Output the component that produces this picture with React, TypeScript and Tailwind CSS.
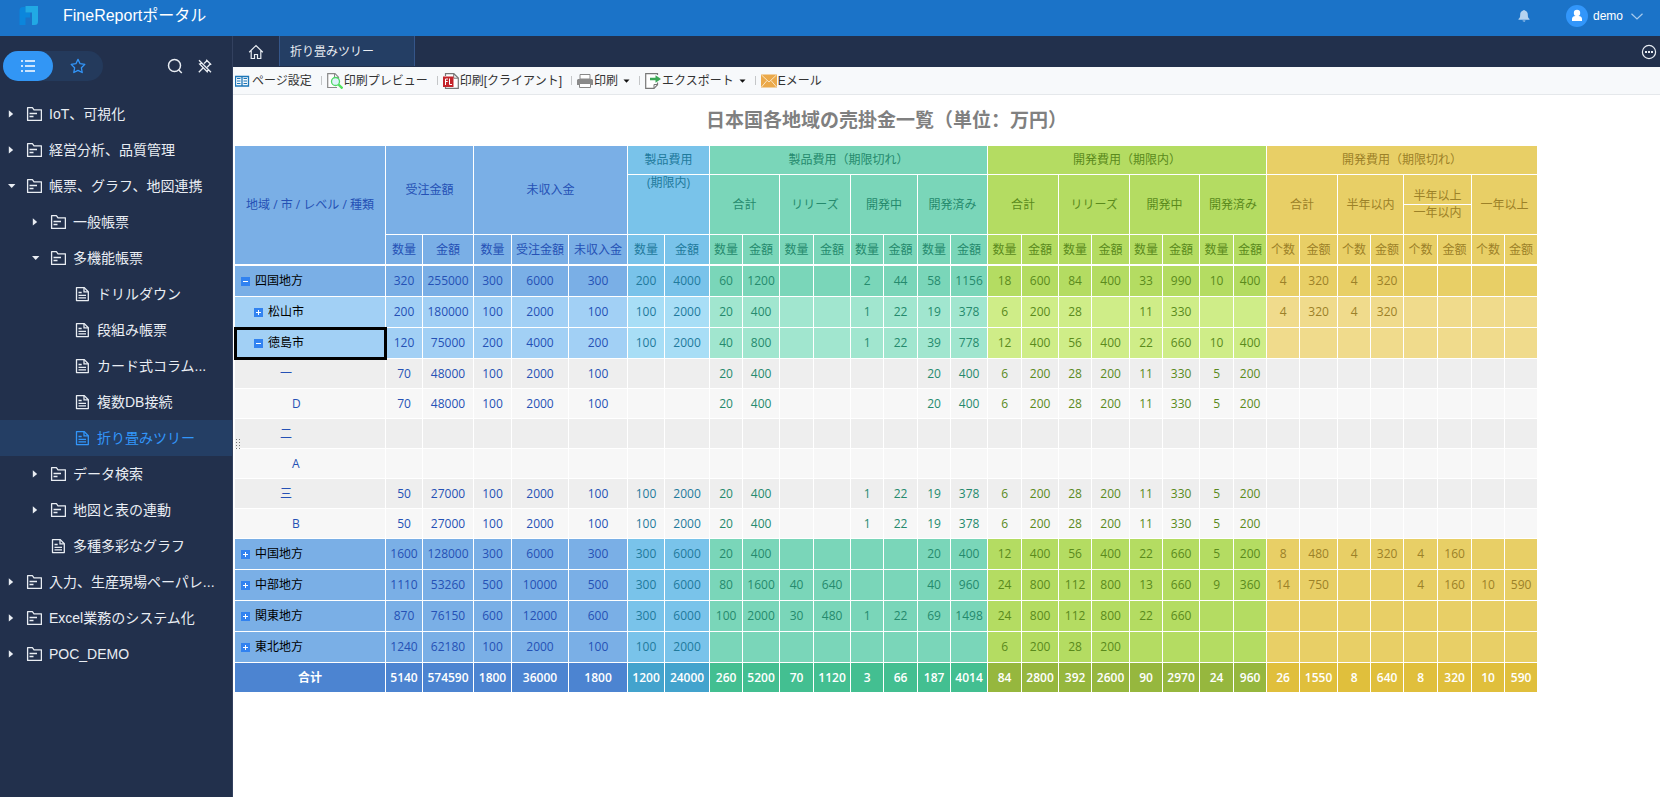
import clsx from "clsx";
import type { ReactNode } from "react";

type NavNode = {
  label: string;
  level: 0 | 1 | 2;
  kind: "folder" | "doc";
  open?: boolean;
  active?: boolean;
};

const NAV: NavNode[] = [
  { label: "IoT、可視化", level: 0, kind: "folder" },
  { label: "経営分析、品質管理", level: 0, kind: "folder" },
  { label: "帳票、グラフ、地図連携", level: 0, kind: "folder", open: true },
  { label: "一般帳票", level: 1, kind: "folder" },
  { label: "多機能帳票", level: 1, kind: "folder", open: true },
  { label: "ドリルダウン", level: 2, kind: "doc" },
  { label: "段組み帳票", level: 2, kind: "doc" },
  { label: "カード式コラム...", level: 2, kind: "doc" },
  { label: "複数DB接続", level: 2, kind: "doc" },
  { label: "折り畳みツリー", level: 2, kind: "doc", active: true },
  { label: "データ検索", level: 1, kind: "folder" },
  { label: "地図と表の連動", level: 1, kind: "folder" },
  { label: "多種多彩なグラフ", level: 1, kind: "doc" },
  { label: "入力、生産現場ペーパレ...", level: 0, kind: "folder" },
  { label: "Excel業務のシステム化", level: 0, kind: "folder" },
  { label: "POC_DEMO", level: 0, kind: "folder" },
];

const INDENT = ["pl-2", "pl-8", "pl-14"];

const COLS = [
  151, 37, 51, 38, 57, 59, 37, 45, 33, 37, 34, 37, 33, 34, 33, 37, 34, 37, 33,
  38, 33, 37, 34, 33, 33, 38, 33, 33, 34, 34, 33, 33,
];

// column groups: blue, sky, teal, green, gold
const GROUP_ENDS = [5, 7, 15, 23, 31];
const group = (col: number) => GROUP_ENDS.findIndex((end) => col <= end);

const TEXT = [
  "text-[#2551b5]",
  "text-[#1f7a9c]",
  "text-[#258a6d]",
  "text-[#5a8a1c]",
  "text-[#9c8128]",
];
const BASE = [
  "bg-[#7aafe6]",
  "bg-[#79c3ea]",
  "bg-[#7ad6b9]",
  "bg-[#b4dc62]",
  "bg-[#e8cf66]",
];
const LIGHT = [
  "bg-[#a2d0f5]",
  "bg-[#a8def6]",
  "bg-[#a1e6cf]",
  "bg-[#cfed88]",
  "bg-[#f0db8c]",
];
const TOTAL = [
  "bg-[#4c84d1]",
  "bg-[#43a3cd]",
  "bg-[#43bf91]",
  "bg-[#96b73e]",
  "bg-[#e0bf3c]",
];

type RowKind = "region" | "city" | "grade" | "item" | "total";
type Row = {
  label: string;
  kind: RowKind;
  open?: boolean;
  selected?: boolean;
  values: string;
};

// "-" stands for an empty cell
const ROWS: Row[] = [
  { label: "四国地方", kind: "region", open: true, values: "320 255000 300 6000 300 200 4000 60 1200 - - 2 44 58 1156 18 600 84 400 33 990 10 400 4 320 4 320 - - - -" },
  { label: "松山市", kind: "city", values: "200 180000 100 2000 100 100 2000 20 400 - - 1 22 19 378 6 200 28 - 11 330 - - 4 320 4 320 - - - -" },
  { label: "徳島市", kind: "city", open: true, selected: true, values: "120 75000 200 4000 200 100 2000 40 800 - - 1 22 39 778 12 400 56 400 22 660 10 400 - - - - - - - -" },
  { label: "一", kind: "grade", values: "70 48000 100 2000 100 - - 20 400 - - - - 20 400 6 200 28 200 11 330 5 200 - - - - - - - -" },
  { label: "D", kind: "item", values: "70 48000 100 2000 100 - - 20 400 - - - - 20 400 6 200 28 200 11 330 5 200 - - - - - - - -" },
  { label: "二", kind: "grade", values: "- - - - - - - - - - - - - - - - - - - - - - - - - - - - - - -" },
  { label: "A", kind: "item", values: "- - - - - - - - - - - - - - - - - - - - - - - - - - - - - - -" },
  { label: "三", kind: "grade", values: "50 27000 100 2000 100 100 2000 20 400 - - 1 22 19 378 6 200 28 200 11 330 5 200 - - - - - - - -" },
  { label: "B", kind: "item", values: "50 27000 100 2000 100 100 2000 20 400 - - 1 22 19 378 6 200 28 200 11 330 5 200 - - - - - - - -" },
  { label: "中国地方", kind: "region", values: "1600 128000 300 6000 300 300 6000 20 400 - - - - 20 400 12 400 56 400 22 660 5 200 8 480 4 320 4 160 - -" },
  { label: "中部地方", kind: "region", values: "1110 53260 500 10000 500 300 6000 80 1600 40 640 - - 40 960 24 800 112 800 13 660 9 360 14 750 - - 4 160 10 590" },
  { label: "関東地方", kind: "region", values: "870 76150 600 12000 600 300 6000 100 2000 30 480 1 22 69 1498 24 800 112 800 22 660 - - - - - - - - - -" },
  { label: "東北地方", kind: "region", values: "1240 62180 100 2000 100 100 2000 - - - - - - - - 6 200 28 200 - - - - - - - - - - - -" },
  { label: "合计", kind: "total", values: "5140 574590 1800 36000 1800 1200 24000 260 5200 70 1120 3 66 187 4014 84 2800 392 2600 90 2970 24 960 26 1550 8 640 8 320 10 590" },
];

const UNITS = [
  "数量", "金額", "数量", "受注金額", "未収入金", "数量", "金額",
  "数量", "金額", "数量", "金額", "数量", "金額", "数量", "金額",
  "数量", "金額", "数量", "金額", "数量", "金額", "数量", "金額",
  "个数", "金额", "个数", "金额", "个数", "金额", "个数", "金额",
];

function FolderIcon() {
  return (
    <svg className="size-4 shrink-0" viewBox="0 0 16 16" fill="none" stroke="currentColor" strokeWidth="1.3">
      <path d="M1.600 14.400V1.700h4.800l1.600 2.100h7.400v10.600z" strokeLinejoin="round" />
      <path d="M3.500 7.500h7.500M3.500 10.500h4" />
    </svg>
  );
}

function DocIcon() {
  return (
    <svg className="size-4 shrink-0" viewBox="0 0 16 16" fill="none" stroke="currentColor" strokeWidth="1.3">
      <path d="M2.500 1.600h7.800l4 4.100v8.900H2.500z" strokeLinejoin="round" />
      <path d="M10 1.600v4.300h4.300M4.500 6.500h3.200M4.500 9.300h7.500M4.500 11.900h7.500" />
    </svg>
  );
}

function Caret({ open }: { open?: boolean }) {
  return (
    <svg className="size-2 shrink-0" viewBox="0 0 8 8" fill="currentColor">
      {open ? <path d="M0 2h7.400L3.700 6z" /> : <path d="M0.800 0.200v7.400L5.200 3.900z" />}
    </svg>
  );
}

function NavItem({ node }: { node: NavNode }) {
  return (
    <li>
      <a
        href="#"
        className={clsx(
          "flex h-9 items-center text-[14px] whitespace-nowrap",
          INDENT[node.level],
          node.active ? "bg-[#243e64] text-[#3296fa]" : "text-[#e9edf3]",
        )}
      >
        <span className="flex w-[18px] shrink-0 items-center">
          {node.kind === "folder" && <Caret open={node.open} />}
        </span>
        {node.kind === "folder" ? <FolderIcon /> : <DocIcon />}
        <span className="ml-[7px]">{node.label}</span>
      </a>
    </li>
  );
}

function Sidebar() {
  return (
    <aside className="w-[233px] shrink-0 border-r border-[#33415f] bg-[#22304c]">
      <div className="flex h-[45px] items-end justify-between pr-[19px] pl-[3px]">
        <div className="flex h-[30px] w-[100px] rounded-full bg-[#243a5c]">
          <button aria-label="ディレクトリ" className="flex w-[50px] items-center justify-center rounded-full bg-[#3296f5] text-white">
            <svg className="size-4" viewBox="0 0 16 16" fill="none" stroke="currentColor" strokeWidth="1.6">
              <path d="M5 3h10M5 8h10M5 13h10M1 3h2M1 8h2M1 13h2" />
            </svg>
          </button>
          <button aria-label="お気に入り" className="flex w-[50px] items-center justify-center text-[#3296fa]">
            <svg className="size-4" viewBox="0 0 16 16" fill="none" stroke="currentColor" strokeWidth="1.3" strokeLinejoin="round">
              <path d="M8 1.4l2.1 4.3 4.7.7-3.4 3.4.8 4.7L8 12.3l-4.2 2.2.8-4.7L1.2 6.4l4.7-.7z" />
            </svg>
          </button>
        </div>
        <div className="flex h-[30px] items-center gap-[14px] text-[#e9edf3]">
          <button aria-label="検索">
            <svg className="size-4" viewBox="0 0 16 16" fill="none" stroke="currentColor" strokeWidth="1.5">
              <circle cx="7.500" cy="7.500" r="6" />
              <path d="M11.800 12l3 3" />
            </svg>
          </button>
          <button aria-label="固定解除">
            <svg className="size-4" viewBox="0 0 16 16" fill="none" stroke="currentColor" strokeWidth="1.3">
              <path d="M2 2.200l12 12M9.200 1.800l5 5M10 2.800L7 5.600M13.200 6l-3 3.200M5.200 5L2.600 6l7.600 7.800 1-2.800M6 10l-4.200 4.300" />
            </svg>
          </button>
        </div>
      </div>
      <ul className="mt-[15px]">
        {NAV.map((node) => (
          <NavItem key={node.label} node={node} />
        ))}
      </ul>
    </aside>
  );
}

function TopBar() {
  return (
    <header className="flex h-9 items-center justify-between bg-[#1b73c8] pr-[17px] pb-1 pl-[18px] text-white">
      <div className="flex items-center">
        <svg className="h-5 w-[22px]" viewBox="0 0 22 20">
          <path d="M1.500 4.500A3.500 3.500 0 0 1 5 1h2.500v5.500H12v5H7.500V19h-6z" fill="#0b86dc" />
          <path d="M7.500 0H20v15.500a3.500 3.500 0 0 1-3.500 3.500H14V6.500H7.500z" fill="#21a9e4" />
        </svg>
        <h1 className="ml-[23px] text-[16px] leading-5">FineReportポータル</h1>
      </div>
      <div className="flex items-center">
        <button aria-label="通知" className="mr-9 text-[#b4d2ef]">
          <svg className="size-3" viewBox="0 0 12 12" fill="currentColor">
            <path d="M5.300.6a.7.7 0 0 1 1.400 0C8.700 1 9.800 2.600 9.800 4.500c0 2.800.5 3.700 1.700 4.500v.7H.5V9c1.200-.8 1.700-1.700 1.700-4.500C2.200 2.600 3.300 1 5.300.6zM4.500 10.500h3c-.2.8-.8 1.200-1.500 1.200s-1.300-.4-1.500-1.200z" />
          </svg>
        </button>
        <button className="flex items-center">
          <svg className="size-[22px]" viewBox="0 0 22 22">
            <circle cx="11" cy="11" r="11" fill="#3296fa" />
            <circle cx="11" cy="8" r="3.200" fill="#fff" />
            <path d="M6 16v-2.200c0-1.700 1.500-2.800 3.300-2.800h3.400c1.800 0 3.300 1.100 3.300 2.800V16z" fill="#fff" />
          </svg>
          <span className="ml-[5px] text-[12px] leading-4">demo</span>
          <svg className="ml-2 h-[7px] w-3" viewBox="0 0 12 7" fill="none" stroke="#a8cbee" strokeWidth="1.200">
            <path d="M.5.7L6 6 11.500.7" />
          </svg>
        </button>
      </div>
    </header>
  );
}

function TabBar() {
  return (
    <nav className="flex h-[31px] items-center bg-[#22304c] pr-[3px] text-[#e9edf3]">
      <button aria-label="ホーム" className="flex w-[46px] justify-center pr-px">
        <svg className="size-4" viewBox="0 0 16 16" fill="none" stroke="currentColor" strokeWidth="1.200">
          <path d="M1.200 8.200L8 1.500l6.800 6.700M3.200 6.500v8h3.300v-4h3v4h3.300v-8" />
        </svg>
      </button>
      <a href="#" className="flex h-[30px] w-[136px] items-center self-start border-x border-[#35568a] bg-[#243e64] pt-px pl-[10px] text-[12px]">
        折り畳みツリー
      </a>
      <button aria-label="その他" className="ml-auto">
        <svg className="size-4" viewBox="0 0 16 16" fill="none" stroke="currentColor" strokeWidth="1.200">
          <circle cx="8" cy="8" r="6.600" />
          <path d="M4 8h2M7 8h2M10 8h2" strokeWidth="1.800" />
        </svg>
      </button>
    </nav>
  );
}

function Tool({ icon, label, menu }: { icon: ReactNode; label: string; menu?: boolean }) {
  return (
    <button className="flex items-center gap-px">
      {icon}
      <span>{label}</span>
      {menu && (
        <svg className="ml-1 h-1 w-[7px]" viewBox="0 0 7 4">
          <path d="M0.500 0.500h6L3.500 3.800z" fill="#111" />
        </svg>
      )}
    </button>
  );
}

const Divider = () => <span className="mr-[5px] ml-[9px] h-[9px] w-px bg-[#c4c6c8]" />;

function Toolbar() {
  return (
    <div className="flex h-7 items-center border-b border-[#e5e8eb] bg-[#f7f9fb] pl-[2px] text-[12px] text-[#333]">
      <Tool
        label="ページ設定"
        icon={
          <svg className="size-4" viewBox="0 0 16 16" fill="none" stroke="#1b76b8">
            <path d="M.5 3.500h13v9.500H.5zM7 3v10" strokeWidth="1.300" />
            <path d="M2 5.500h3.500M2 8h3.500M2 10.500h3.500M8.500 5.500H12M8.500 8H12M8.500 10.500H12" />
          </svg>
        }
      />
      <Divider />
      <Tool
        label="印刷プレビュー"
        icon={
          <svg className="size-4" viewBox="0 0 16 16" fill="none">
            <path d="M10 14.500H.7V.7h7.300l3.500 3.500v2" fill="#fff" stroke="#888" strokeWidth="1.200" />
            <path d="M7.500.7v3.800h4" stroke="#888" />
            <circle cx="8.500" cy="8.500" r="4" fill="#dff2fb" stroke="#4fd966" strokeWidth="1.300" />
            <path d="M11.500 11.500l4 4" stroke="#4fe05c" strokeWidth="2.400" />
          </svg>
        }
      />
      <Divider />
      <Tool
        label="印刷[クライアント]"
        icon={
          <svg className="size-4" viewBox="0 0 16 16" fill="none">
            <path d="M2.500 3V.7h8.300L15.300 5v10.300H2.500V14" fill="#fff" stroke="#777" strokeWidth="1.200" />
            <path d="M10.700.7v4.500h4.500" stroke="#777" />
            <path d="M0 3.500h10.500V14H0z" fill="#c4242b" />
            <path d="M2.500 12V6H5M2.500 8.500h2.200M6.500 5.500v6H9" stroke="#fff" />
          </svg>
        }
      />
      <Divider />
      <Tool
        label="印刷"
        menu
        icon={
          <svg className="size-4" viewBox="0 0 16 16" fill="none">
            <path d="M3 1.500h10V6H3z" fill="#fff" stroke="#888" />
            <path d="M1 6h14l1 1v5H0V7z" fill="#8a8a8a" />
            <path d="M2.500 10.500h11v4h-11z" fill="#fff" stroke="#888" />
          </svg>
        }
      />
      <Divider />
      <Tool
        label="エクスポート"
        menu
        icon={
          <svg className="size-4" viewBox="0 0 16 16" fill="none">
            <path d="M12.500 2V.7H.7v14.600h8.300l3.500-3.500V9.500" fill="#fff" stroke="#777" strokeWidth="1.200" />
            <path d="M12.500 11.500H9v3.800" stroke="#777" />
            <path d="M5 4.800h5.500V2.300L16 6l-5.500 3.800V7.300H5z" fill="#3aa856" />
          </svg>
        }
      />
      <Divider />
      <Tool
        label="Eメール"
        icon={
          <svg className="size-4" viewBox="0 0 16 16" fill="none">
            <path d="M0 1.500h16v13H0z" fill="#eba94a" />
            <path d="M.5 2l7.500 7L15.500 2M.5 14l5.500-6.500M15.500 14L10 7.500" stroke="#fbe6c4" strokeWidth="1" />
          </svg>
        }
      />
    </div>
  );
}

type HeadProps = {
  g: number;
  colSpan?: number;
  rowSpan?: number;
  className?: string;
  children: ReactNode;
};

function Head({ g, className, children, ...span }: HeadProps) {
  return (
    <th
      {...span}
      className={clsx("border-r border-b border-white p-0 font-normal whitespace-nowrap", BASE[g], TEXT[g], className)}
    >
      {children}
    </th>
  );
}

function Toggle({ open }: { open?: boolean }) {
  return (
    <button aria-label={open ? "折り畳む" : "展開"} className="mr-[5px]">
      <svg className="block size-[9px]" viewBox="0 0 9 9">
        <path d="M0 0h9v9H0z" fill="#3182f0" />
        <path d={open ? "M2 4.500h5" : "M2 4.500h5M4.500 2v5"} stroke="#fff" />
      </svg>
    </button>
  );
}

function cellColor(kind: RowKind, g: number) {
  if (kind === "region") return clsx(BASE[g], TEXT[g]);
  if (kind === "city") return clsx(LIGHT[g], TEXT[g]);
  if (kind === "grade") return clsx("bg-[#eeeeee]", TEXT[g]);
  if (kind === "item") return clsx("bg-[#f7f7f7]", TEXT[g]);
  return clsx(TOTAL[g], "font-semibold text-white");
}

const LABEL: Record<RowKind, string> = {
  region: "pl-[6px] text-left",
  city: "pl-[19px] text-left",
  grade: "pl-[45px] text-left",
  item: "pl-[57px] text-left",
  total: "text-center",
};

function DataRow({ row }: { row: Row }) {
  const tall = row.kind === "region" || row.kind === "city";
  return (
    <tr className={tall ? "h-[31px]" : "h-[30px]"}>
      <th
        scope="row"
        className={clsx(
          "border-r border-b border-white py-0 pr-0",
          row.kind !== "total" && "font-normal",
          cellColor(row.kind, 0),
          LABEL[row.kind],
          row.selected && "outline-3 -outline-offset-2 outline-black",
        )}
      >
        <span className={clsx(tall && "flex items-center text-black")}>
          {tall && <Toggle open={row.open} />}
          {row.label}
        </span>
      </th>
      {row.values.split(" ").map((value, i) => (
        <td
          key={i}
          className={clsx("border-r border-b border-white p-0 text-center", cellColor(row.kind, group(i + 1)))}
        >
          {value === "-" ? "" : value}
        </td>
      ))}
    </tr>
  );
}

function Report() {
  return (
    <table className="w-[1303px] table-fixed border-separate border-spacing-0 font-['Open_Sans','Noto_Sans_CJK_SC',sans-serif] text-[12px] leading-4">
      <caption className="h-[51px] pt-[13px] text-[19px] leading-6 font-bold text-[#808080]">
        日本国各地域の売掛金一覧（単位：万円）
      </caption>
      <colgroup>
        {COLS.map((width, i) => (
          <col key={i} style={{ width }} />
        ))}
      </colgroup>
      <thead>
        <tr className="h-[29px]">
          <Head g={0} rowSpan={4} className="border-b-2">地域 / 市 / レベル / 種類</Head>
          <Head g={0} rowSpan={3} colSpan={2}>受注金額</Head>
          <Head g={0} rowSpan={3} colSpan={3}>未収入金</Head>
          <Head g={1} colSpan={2}>製品費用</Head>
          <Head g={2} colSpan={8}>製品費用（期限切れ）</Head>
          <Head g={3} colSpan={8}>開発費用（期限内）</Head>
          <Head g={4} colSpan={8}>開発費用（期限切れ）</Head>
        </tr>
        <tr className="h-[30px]">
          <Head g={1} rowSpan={2} colSpan={2} className="align-top">(期限内)</Head>
          {[2, 3].map((g) =>
            ["合計", "リリーズ", "開発中", "開発済み"].map((name) => (
              <Head key={g + name} g={g} rowSpan={2} colSpan={2}>{name}</Head>
            )),
          )}
          <Head g={4} rowSpan={2} colSpan={2}>合計</Head>
          <Head g={4} rowSpan={2} colSpan={2}>半年以内</Head>
          <Head g={4} colSpan={2} className="align-bottom">半年以上</Head>
          <Head g={4} rowSpan={2} colSpan={2}>一年以上</Head>
        </tr>
        <tr className="h-[30px]">
          <Head g={4} colSpan={2} className="align-top">一年以内</Head>
        </tr>
        <tr className="h-[31px]">
          {UNITS.map((unit, i) => (
            <Head key={i} g={group(i + 1)} className="border-b-2">{unit}</Head>
          ))}
        </tr>
      </thead>
      <tbody>
        {ROWS.map((row) => (
          <DataRow key={row.label} row={row} />
        ))}
      </tbody>
    </table>
  );
}

export default function App() {
  return (
    <div className="flex min-h-screen flex-col bg-white font-['Liberation_Sans','Noto_Sans_CJK_JP',sans-serif]">
      <TopBar />
      <div className="flex grow">
        <Sidebar />
        <div className="min-w-0 grow">
          <TabBar />
          <Toolbar />
          <main className="relative overflow-x-auto pl-[2px]">
            <Report />
            <svg className="absolute top-[344px] left-[3px] h-3 w-1" viewBox="0 0 4 12" stroke="#777" strokeDasharray="1 2">
              <path d="M.5 0v12M3.500 0v12" />
            </svg>
          </main>
        </div>
      </div>
    </div>
  );
}
